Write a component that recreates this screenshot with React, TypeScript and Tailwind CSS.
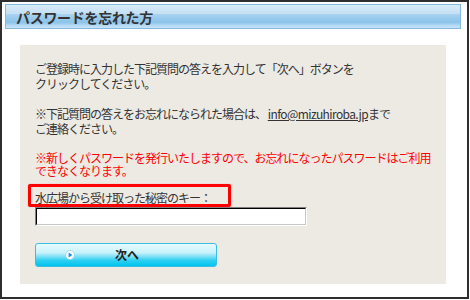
import React from "react";

const jp = { fontFamily: '"Noto Sans CJK JP", "Noto Sans", sans-serif' };

export default function App() {
  return (
    <div
      className="w-[469px] h-[299px] border-2 border-[#2e2e2e] bg-white flex flex-col"
      style={jp}
    >
      <div
        className="ml-[3px] mt-[2px] w-[456px] h-[25px] border border-[#86b9dc] flex items-center pl-[10px] bg-[linear-gradient(to_bottom,#d8ebf7_0%,#c4e0f4_38%,#a6d1ef_42%,#8bc4ea_75%,#b6dbf5_90%,#c8e4f8_100%)]"
      >
        <span className="text-[14px] font-bold leading-none text-[#333] tracking-[-0.3px]">
          パスワードを忘れた方
        </span>
      </div>

      <div className="ml-[18px] mt-[16px] w-[426px] h-[239px] bg-[#edeae4] pt-[16px] pl-[15px] flex flex-col items-start">
        <p className="text-[12px] leading-[15px] tracking-[-1px] text-[#333]">
          ご登録時に入力した下記質問の答えを入力して「次へ」ボタンを
          <br />
          クリックしてください。
        </p>
        <p className="mt-[15px] text-[12px] leading-[15px] tracking-[-1px] text-[#333]">
          ※下記質問の答えをお忘れになられた場合は、{" "}
          <span className="underline tracking-[-0.6px]">info@mizuhiroba.jp</span>まで
          <br />
          ご連絡ください。
        </p>
        <p className="mt-[15px] text-[12px] leading-[13px] tracking-[-1px] text-[#ff0000]">
          ※新しくパスワードを発行いたしますので、お忘れになったパスワードはご利用
          <br />
          できなくなります。
        </p>

        <div className="relative mt-[13px]">
          <div className="absolute left-[-7px] top-[-6px] w-[203px] h-[23px] border-[3px] border-[#ff0000] rounded-[2px] shadow-[0_0_1px_#ff6060]" />
          <span className="relative text-[12px] leading-[15px] tracking-[-1px] text-[#333] block">
            水広場から受け取った秘密のキー：
          </span>
        </div>

        <div className="mt-[2px] w-[272px] h-[19px] border border-t-[#808080] border-l-[#808080] border-r-white border-b-white">
          <div className="w-full h-full border border-t-black border-l-black border-r-[#c8c8c8] border-b-[#c8c8c8] bg-white" />
        </div>

        <div className="mt-[17px] w-[182px] h-[24px] rounded-[3px] border border-[#3cbde0] bg-[linear-gradient(to_bottom,#e8fcff_0%,#c6f2fc_40%,#86e2f7_55%,#2ecff2_75%,#00c3ed_100%)] flex items-center relative">
          <svg
            className="absolute left-[29px] top-[6px]"
            width="10"
            height="10"
            viewBox="0 0 10 10"
          >
            <circle cx="5" cy="5" r="4.5" fill="#ffffff" stroke="#7ccbec" strokeWidth="0.6" />
            <path d="M3.6 2.4 L7.4 5 L3.6 7.6 Z" fill="#1b8fe2" />
          </svg>
          <span className="w-full text-center text-[12px] font-bold leading-none text-[#222] pl-[2px]">
            次へ
          </span>
        </div>
      </div>
    </div>
  );
}
